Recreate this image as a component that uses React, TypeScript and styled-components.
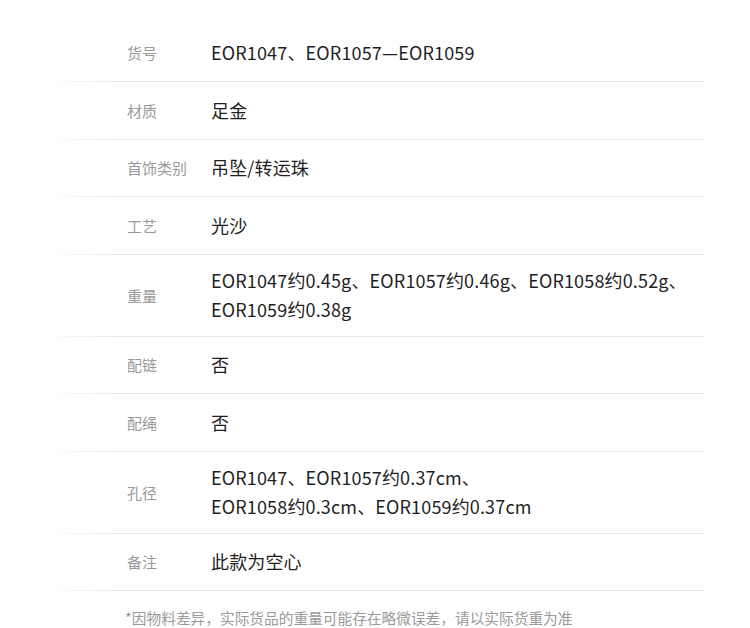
import React from 'react';
import styled, { createGlobalStyle } from 'styled-components';

const GlobalStyle = createGlobalStyle`
  html, body {
    margin: 0;
    padding: 0;
    background: #ffffff;
  }
  body {
    font-family: "Noto Sans CJK SC", "Noto Sans", sans-serif;
  }
`;

const Page = styled.div`
  width: 750px;
  height: 628px;
  overflow: hidden;
  background: #ffffff;
  padding-top: 24.5px;
  box-sizing: border-box;
`;

const Table = styled.div`
  margin-left: 45px;
  width: 659px;
  display: flex;
  flex-direction: column;
`;

const Row = styled.div`
  display: flex;
  align-items: center;
  min-height: 57.5px;
  padding: 11.5px 0 11.5px 82px;
  box-sizing: border-box;
  border-bottom: 1px solid #e9e9e9;
  border-image: linear-gradient(to right, rgba(233, 233, 233, 0), #e9e9e9 70px) 1;
`;

const Label = styled.div`
  flex: 0 0 84px;
  font-size: 15px;
  color: #9a9a9a;
  line-height: 29px;
`;

const Value = styled.div`
  flex: 1;
  font-size: 18px;
  color: #1f1f1f;
  line-height: 29px;
  letter-spacing: 0.15px;
`;

const Note = styled.p`
  margin: 0;
  padding: 18.5px 0 0 125px;
  font-size: 14.7px;
  line-height: 16px;
  color: #9a9a9a;
`;

type Spec = { label: string; lines: string[] };

const specs: Spec[] = [
  { label: '货号', lines: ['EOR1047、EOR1057—EOR1059'] },
  { label: '材质', lines: ['足金'] },
  { label: '首饰类别', lines: ['吊坠/转运珠'] },
  { label: '工艺', lines: ['光沙'] },
  {
    label: '重量',
    lines: ['EOR1047约0.45g、EOR1057约0.46g、EOR1058约0.52g、', 'EOR1059约0.38g'],
  },
  { label: '配链', lines: ['否'] },
  { label: '配绳', lines: ['否'] },
  {
    label: '孔径',
    lines: ['EOR1047、EOR1057约0.37cm、', 'EOR1058约0.3cm、EOR1059约0.37cm'],
  },
  { label: '备注', lines: ['此款为空心'] },
];

const App = () => (
  <Page>
    <GlobalStyle />
    <Table>
      {specs.map((spec) => (
        <Row key={spec.label}>
          <Label>{spec.label}</Label>
          <Value>
            {spec.lines.map((line, i) => (
              <div key={i}>{line}</div>
            ))}
          </Value>
        </Row>
      ))}
    </Table>
    <Note>*因物料差异，实际货品的重量可能存在略微误差，请以实际货重为准</Note>
  </Page>
);

export default App;
